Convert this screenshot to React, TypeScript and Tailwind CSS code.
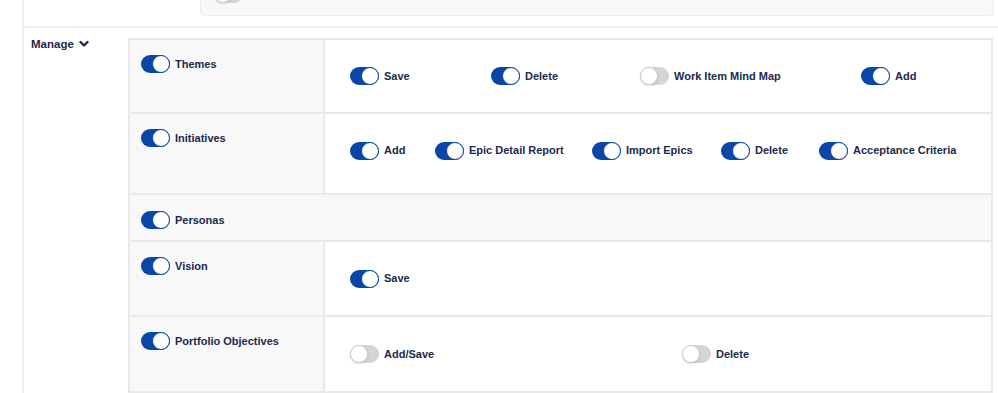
import React from "react";

type ToggleProps = { on?: boolean };

const Toggle: React.FC<ToggleProps> = ({ on = true }) => {
  return (
    <span
      className={`relative inline-block w-[29px] h-[18px] shrink-0 rounded-full ${
        on ? "bg-[#0a46a8]" : "bg-[#d5d5d5]"
      }`}
    >
      <span
        className={`absolute top-0 w-[18px] h-[18px] rounded-full bg-white border ${
          on ? "right-0 border-[#0a46a8]" : "left-0 border-[#cfcfcf] shadow-sm"
        }`}
      />
    </span>
  );
};

type ItemProps = { label: string; on?: boolean; className?: string };

const Item: React.FC<ItemProps> = ({ label, on = true, className = "" }) => (
  <div className={`flex items-center gap-[5px] ${className}`}>
    <Toggle on={on} />
    <span className="text-[11px] font-bold text-[#1a2a4b] leading-none whitespace-nowrap">
      {label}
    </span>
  </div>
);

type Perm = { label: string; on?: boolean; w?: string };

type RowProps = {
  title: string;
  perms?: Perm[];
  height: string;
  pad?: string;
};

const Row: React.FC<RowProps> = ({ title, perms, height, pad = "" }) => {
  if (!perms) {
    return (
      <div className={`flex bg-[#f8f8f8] border-b-2 border-[#e9e9e9] ${height}`}>
        <div className="pl-[11px] pt-[16px]">
          <Item label={title} />
        </div>
      </div>
    );
  }
  return (
    <div className={`flex border-b-2 border-[#e9e9e9] ${height}`}>
      <div className="w-[195px] shrink-0 bg-[#f8f8f8] border-r-2 border-[#e9e9e9] pl-[11px] pt-[15px]">
        <Item label={title} />
      </div>
      <div className={`flex-1 flex items-center pl-[25px] bg-white ${pad}`}>
        {perms.map((p) => (
          <Item key={p.label} label={p.label} on={p.on} className={p.w ?? ""} />
        ))}
      </div>
    </div>
  );
};

export default function App() {
  return (
    <div
      className="w-[998px] h-[393px] overflow-hidden bg-white"
      style={{ fontFamily: "'Liberation Sans', Arial, sans-serif" }}
    >
      <div className="ml-[22px] border-l-2 border-[#eeeeee] h-full">
        {/* previous section, scrolled mostly out of view */}
        <div className="h-[28px] flex flex-col justify-end pb-[10px] overflow-hidden border-b-2 border-[#eeeeee]">
          <div className="ml-[176px] mr-[4px] h-[40px] shrink-0 rounded-[4px] bg-[#f8f8f8] border border-[#ececec] flex items-end pl-[13px] pb-[12px]">
            <Toggle on={false} />
          </div>
        </div>

        {/* Manage section */}
        <div className="flex pt-[10px]">
          <div className="w-[104px] shrink-0 pl-[7px] flex items-start gap-[5px]">
            <span className="text-[11.5px] font-bold text-[#1a2a4b] leading-none mt-[1px]">
              Manage
            </span>
            <svg
              className="w-[10px] h-[8px] mt-[2px]"
              viewBox="0 0 10 8"
              fill="none"
              stroke="#1a2a4b"
              strokeWidth={2.4}
              strokeLinecap="round"
              strokeLinejoin="round"
            >
              <polyline points="1.5,2 5,5.5 8.5,2" />
            </svg>
          </div>

          <div className="w-[865px] shrink-0 border-l-2 border-r-2 border-t-2 border-[#e9e9e9]">
            <Row
              title="Themes"
              height="h-[74px]"
              perms={[
                { label: "Save", w: "w-[141px]" },
                { label: "Delete", w: "w-[149px]" },
                { label: "Work Item Mind Map", on: false, w: "w-[221px]" },
                { label: "Add" },
              ]}
            />
            <Row
              title="Initiatives"
              height="h-[81px]"
              pad="pb-[6px]"
              perms={[
                { label: "Add", w: "w-[85px]" },
                { label: "Epic Detail Report", w: "w-[157px]" },
                { label: "Import Epics", w: "w-[129px]" },
                { label: "Delete", w: "w-[98px]" },
                { label: "Acceptance Criteria" },
              ]}
            />
            <Row title="Personas" height="h-[47px]" />
            <Row title="Vision" height="h-[75px]" perms={[{ label: "Save" }]} />
            <Row
              title="Portfolio Objectives"
              height="h-[76px]"
              perms={[
                { label: "Add/Save", on: false, w: "w-[332px]" },
                { label: "Delete", on: false },
              ]}
            />
          </div>
        </div>
      </div>
    </div>
  );
}
